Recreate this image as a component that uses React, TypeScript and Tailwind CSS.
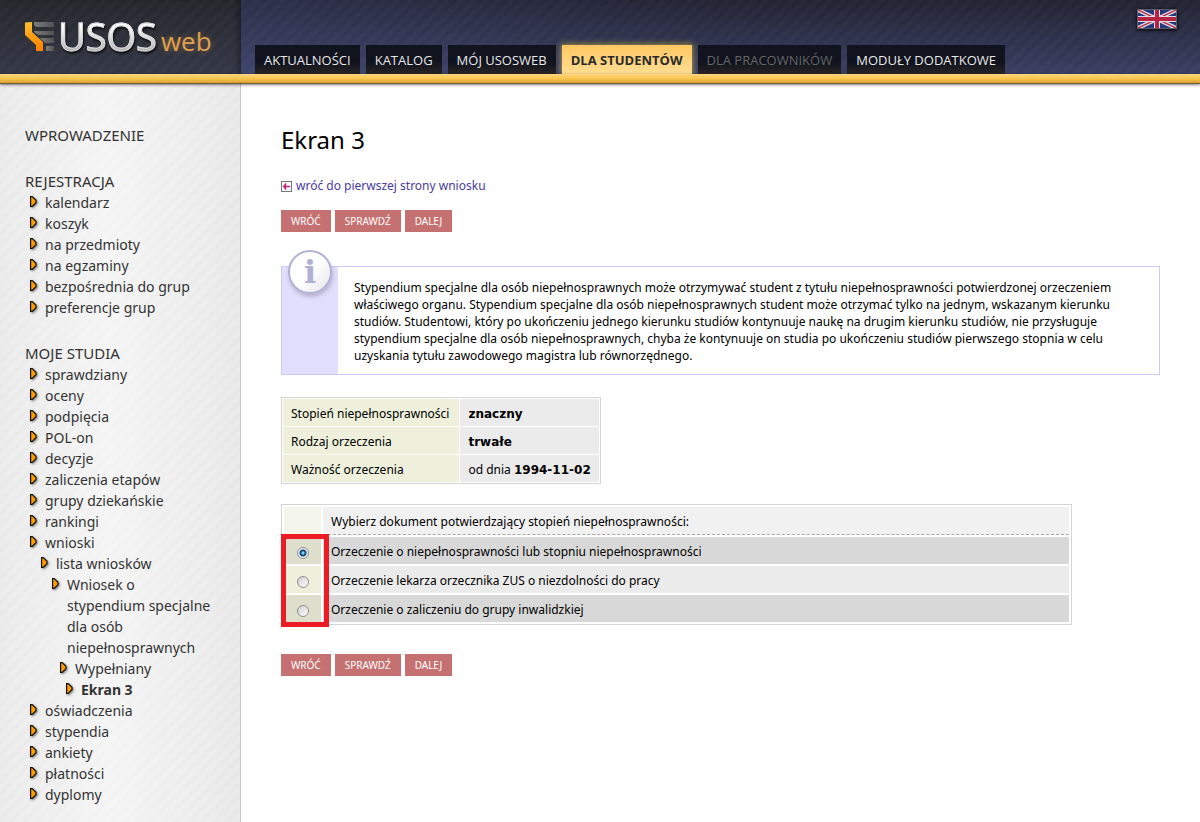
import clsx from "clsx";

type MenuItem = { label: string; level?: 0 | 1 | 2 | 3 | 4; current?: boolean };
type MenuSection = { title: string; items: MenuItem[] };

const tabs = [
    { label: "AKTUALNOŚCI" },
    { label: "KATALOG" },
    { label: "MÓJ USOSWEB" },
    { label: "DLA STUDENTÓW", active: true },
    { label: "DLA PRACOWNIKÓW", disabled: true },
    { label: "MODUŁY DODATKOWE" },
];

const menu: MenuSection[] = [
    { title: "WPROWADZENIE", items: [] },
    {
        title: "REJESTRACJA",
        items: [
            { label: "kalendarz" },
            { label: "koszyk" },
            { label: "na przedmioty" },
            { label: "na egzaminy" },
            { label: "bezpośrednia do grup" },
            { label: "preferencje grup" },
        ],
    },
    {
        title: "MOJE STUDIA",
        items: [
            { label: "sprawdziany" },
            { label: "oceny" },
            { label: "podpięcia" },
            { label: "POL-on" },
            { label: "decyzje" },
            { label: "zaliczenia etapów" },
            { label: "grupy dziekańskie" },
            { label: "rankingi" },
            { label: "wnioski" },
            { label: "lista wniosków", level: 1 },
            { label: "Wniosek o stypendium specjalne dla osób niepełnosprawnych", level: 2 },
            { label: "Wypełniany", level: 3 },
            { label: "Ekran 3", level: 4, current: true },
            { label: "oświadczenia" },
            { label: "stypendia" },
            { label: "ankiety" },
            { label: "płatności" },
            { label: "dyplomy" },
        ],
    },
];

const indents = ["pl-[5px]", "pl-4", "pl-[27px]", "pl-[35px]", "pl-[41px]"];

const documents = [
    "Orzeczenie o niepełnosprawności lub stopniu niepełnosprawności",
    "Orzeczenie lekarza orzecznika ZUS o niezdolności do pracy",
    "Orzeczenie o zaliczeniu do grupy inwalidzkiej",
];

function LogoMark() {
    return (
        <svg width="30" height="30" viewBox="0 0 30 30" aria-hidden="true">
            <defs>
                <linearGradient id="mark" x1="0" y1="0" x2="0" y2="1">
                    <stop offset="0" stopColor="#ffc02c" />
                    <stop offset="1" stopColor="#ff7d00" />
                </linearGradient>
                <linearGradient id="bar" x1="0" y1="0" x2="1" y2="0">
                    <stop offset="0" stopColor="#7c7d7a" />
                    <stop offset="1" stopColor="#505152" />
                </linearGradient>
            </defs>
            <path d="M0 0.5L7 0V10L18 20V29H11V23L0 13Z" fill="url(#mark)" />
            <g fill="url(#bar)">
                <path d="M9 0H29V5H11L9 3Z" />
                <path d="M9 9H29V13H13L9 10Z" />
                <path d="M15 16H29V21H20Z" />
                <path d="M21 24H29V29H21Z" />
            </g>
        </svg>
    );
}

function Flag() {
    return (
        <svg width="38" height="18" viewBox="0 0 38 18" aria-hidden="true">
            <rect width="38" height="18" fill="#25397f" />
            <path d="M0 0L38 18M38 0L0 18" stroke="#dcdce4" strokeWidth="4" />
            <path d="M0 0L38 18M38 0L0 18" stroke="#c0304a" strokeWidth="1.5" />
            <path d="M19 0V18M0 9H38" stroke="#dcdce4" strokeWidth="6" />
            <path d="M19 0V18M0 9H38" stroke="#b62343" strokeWidth="4" />
        </svg>
    );
}

function Arrow() {
    return (
        <svg
            width="7"
            height="11"
            viewBox="0 0 7 11"
            className="mt-1 shrink-0 drop-shadow-[1px_1px_1px_rgba(0,0,0,0.5)]"
            aria-hidden="true"
        >
            <path d="M0.6 0.6H2.2L6 4.3V6.7L2.2 10.4H0.6Z" fill="#ff9c00" stroke="#111" strokeWidth="1.2" />
        </svg>
    );
}

function BackIcon() {
    return (
        <svg width="11" height="11" viewBox="0 0 11 11" className="shrink-0" aria-hidden="true">
            <rect x="0.5" y="0.5" width="10" height="10" fill="#fff" stroke="#777" />
            <path d="M2 5.5L5 2V5H9V6H5V9Z" fill="#c4247c" stroke="#c4247c" strokeWidth="0.5" />
        </svg>
    );
}

function Buttons() {
    return (
        <div className="flex gap-1">
            {["WRÓĆ", "SPRAWDŹ", "DALEJ"].map((label) => (
                <button key={label} type="button" className="h-[22px] bg-[#c67171] px-[10px] text-[10px] leading-[22px] text-white">
                    {label}
                </button>
            ))}
        </div>
    );
}

function Header() {
    return (
        <header className="relative z-10">
            <div className="flex h-[74px] bg-[repeating-linear-gradient(135deg,rgba(255,255,255,0.02)_0_5px,transparent_5px_9px),linear-gradient(90deg,rgba(85,92,155,0.3),transparent_60%),linear-gradient(#222433,#3a3e62)]">
                <a
                    href="#"
                    className="flex w-[241px] shrink-0 items-start bg-[repeating-linear-gradient(135deg,rgba(255,255,255,0.02)_0_5px,transparent_5px_9px),linear-gradient(#26272c,#343747)] pl-[25px] font-['Open_Sans',sans-serif] shadow-[inset_-6px_0_6px_-4px_rgba(0,0,0,0.4)]"
                >
                    <span className="mt-[22px]">
                        <LogoMark />
                    </span>
                    <span className="mt-3 ml-[3px] flex items-baseline leading-[48px]">
                        <span className="bg-linear-to-b from-white from-30% to-[#b5b5b5] to-80% bg-clip-text text-[38px] text-transparent drop-shadow-[1px_2px_1px_rgba(0,0,0,0.7)] [-webkit-text-stroke:1px_#dadada]">
                            USOS
                        </span>
                        <span className="ml-1 text-[26px] text-[#e0a04c] [text-shadow:0_0_6px_rgba(224,160,76,0.4)]">web</span>
                    </span>
                </a>
                <nav className="flex flex-1 items-end gap-[6px] pl-[14px] font-['Open_Sans',sans-serif] text-[13px]">
                    {tabs.map((tab) => (
                        <a
                            key={tab.label}
                            href="#"
                            className={clsx(
                                "h-[29px] px-[9px] leading-[31px] whitespace-nowrap",
                                tab.active
                                    ? "bg-linear-to-b from-[#ffc862] to-[#ffdd92] font-bold text-[#2a2a2a] shadow-[0_0_6px_1px_rgba(220,200,60,0.6)]"
                                    : "bg-linear-to-b from-[#11131e] from-60% to-[#292525]",
                                tab.disabled && "text-[#666]",
                                !tab.active && !tab.disabled && "text-[#e8e8e8]",
                            )}
                        >
                            {tab.label}
                        </a>
                    ))}
                </nav>
                <a href="#" aria-label="English" className="mt-[9px] mr-[23px] h-5 border border-[#5b5d68] shadow-[0_1px_4px_#000]">
                    <Flag />
                </a>
            </div>
            <div className="relative h-[10px] border-b border-[#6d5c33] bg-linear-to-b from-[#ffd67d] via-[#fbc550] to-[#d9a035] shadow-[0_1px_3px_rgba(0,0,0,0.5)]" />
        </header>
    );
}

function Sidebar() {
    return (
        <aside className="w-[241px] shrink-0 border-r border-[#c8c8c8] bg-[repeating-linear-gradient(135deg,rgba(255,255,255,0.15)_0_5px,transparent_5px_9px),linear-gradient(90deg,#e9e9e9,#f4f4f4_45%,#e7e7e7)] pt-[41px] pr-7 pb-4 pl-[25px] font-['Noto_Sans',sans-serif] text-[14px] leading-[21px] text-[#333]">
            <nav className="flex flex-col gap-[25px]">
                {menu.map((section) => (
                    <div key={section.title}>
                        <a href="#" className="block text-[15px] leading-[21px]">{section.title}</a>
                        <ul>
                            {section.items.map((item) => (
                                <li key={item.label} className={clsx("flex items-start gap-2", indents[item.level ?? 0])}>
                                    <Arrow />
                                    <a href="#" className={clsx(item.current && "font-bold")}>
                                        {item.label}
                                    </a>
                                </li>
                            ))}
                        </ul>
                    </div>
                ))}
            </nav>
        </aside>
    );
}

function InfoBox() {
    return (
        <div className="relative mt-[34px] border border-[#cdc8f4] bg-linear-to-r from-[#e2dffe] from-[56px] to-white to-[56px] pt-3 pr-8 pb-[10px] pl-[72px] leading-[17px]">
            <span className="absolute -top-[17px] left-[6px] flex size-11 items-center justify-center rounded-full border-2 border-[#b0b0d6] bg-linear-to-br from-white from-50% to-[#e4e4ec] font-['DejaVu_Serif',serif] text-[32px] font-bold text-[#b0b0d6] shadow-[1px_3px_4px_rgba(0,0,0,0.2)]">
                i
            </span>
            <p>
                Stypendium specjalne dla osób niepełnosprawnych może otrzymywać student z tytułu niepełnosprawności
                potwierdzonej orzeczeniem właściwego organu. Stypendium specjalne dla osób niepełnosprawnych student może
                otrzymać tylko na jednym, wskazanym kierunku studiów. Studentowi, który po ukończeniu jednego kierunku
                studiów kontynuuje naukę na drugim kierunku studiów, nie przysługuje stypendium specjalne dla osób
                niepełnosprawnych, chyba że kontynuuje on studia po ukończeniu studiów pierwszego stopnia w celu uzyskania
                tytułu zawodowego magistra lub równorzędnego.
            </p>
        </div>
    );
}

function Summary() {
    const label = "h-[27px] bg-[#eef0dc] pt-[2px] pr-[10px] pl-2 text-left font-normal";
    const value = "h-[27px] bg-[#ebebeb] px-2 pt-[2px]";
    const strong = "font-['DejaVu_Sans',sans-serif] font-bold";
    return (
        <table className="mt-[22px] border-separate border-spacing-px border border-[#d5d5d5]">
            <tbody>
                <tr>
                    <th scope="row" className={label}>Stopień niepełnosprawności</th>
                    <td className={value}><b className={strong}>znaczny</b></td>
                </tr>
                <tr>
                    <th scope="row" className={label}>Rodzaj orzeczenia</th>
                    <td className={value}><b className={strong}>trwałe</b></td>
                </tr>
                <tr>
                    <th scope="row" className={label}>Ważność orzeczenia</th>
                    <td className={value}>od dnia <b className={strong}>1994-11-02</b></td>
                </tr>
            </tbody>
        </table>
    );
}

function DocumentChoice() {
    return (
        <div className="relative mt-5 mb-[29px] w-9/10">
            <table className="w-full border-separate border-spacing-[2px] border border-[#d5d5d5]">
                <thead>
                    <tr>
                        <td className="h-7 w-[37px] bg-[#f4f5ea]" />
                        <th scope="col" className="h-7 border-b border-dashed border-[#aaa] bg-[#f1f1f1] px-2 pt-[2px] text-left font-normal">
                            Wybierz dokument potwierdzający stopień niepełnosprawności:
                        </th>
                    </tr>
                </thead>
                <tbody>
                    {documents.map((name, i) => (
                        <tr key={name}>
                            <td className={clsx("h-[27px] pt-[5px]", i % 2 ? "bg-[#eef0dc]" : "bg-[#dddecb]")}>
                                <input
                                    type="radio"
                                    name="document"
                                    id={`document-${i}`}
                                    defaultChecked={i === 0}
                                    className="mx-auto block size-3 appearance-none rounded-full border border-[#8e8f8f] bg-linear-to-br from-[#cfcfcf] to-white checked:bg-[radial-gradient(circle_at_center,#7fd4f5_0_1px,#12649b_2px,#123a5c_3px,#eef_4px)]"
                                />
                            </td>
                            <td className={clsx("h-[27px] px-2 pt-[2px]", i % 2 ? "bg-[#ebebeb]" : "bg-[#d8d8d8]")}>
                                <label htmlFor={`document-${i}`}>{name}</label>
                            </td>
                        </tr>
                    ))}
                </tbody>
            </table>
            {/* highlight around the radio column */}
            <div className="pointer-events-none absolute top-[30px] left-0 h-[93px] w-12 border-[5px] border-[#ed1c24]" />
        </div>
    );
}

export default function App() {
    return (
        <div className="flex min-h-screen flex-col bg-white">
            <Header />
            <div className="flex flex-1">
                <Sidebar />
                <main className="min-w-0 flex-1 px-10 pt-10 pb-10 font-['Noto_Sans',sans-serif] text-[12px] leading-4 text-black">
                    <h1 className="text-[24px] leading-8">Ekran 3</h1>
                    <a href="#" className="mt-[22px] mb-4 flex items-center gap-1 text-[#4a3ba0]">
                        <BackIcon />
                        wróć do pierwszej strony wniosku
                    </a>
                    <Buttons />
                    <InfoBox />
                    <Summary />
                    <DocumentChoice />
                    <Buttons />
                </main>
            </div>
        </div>
    );
}
